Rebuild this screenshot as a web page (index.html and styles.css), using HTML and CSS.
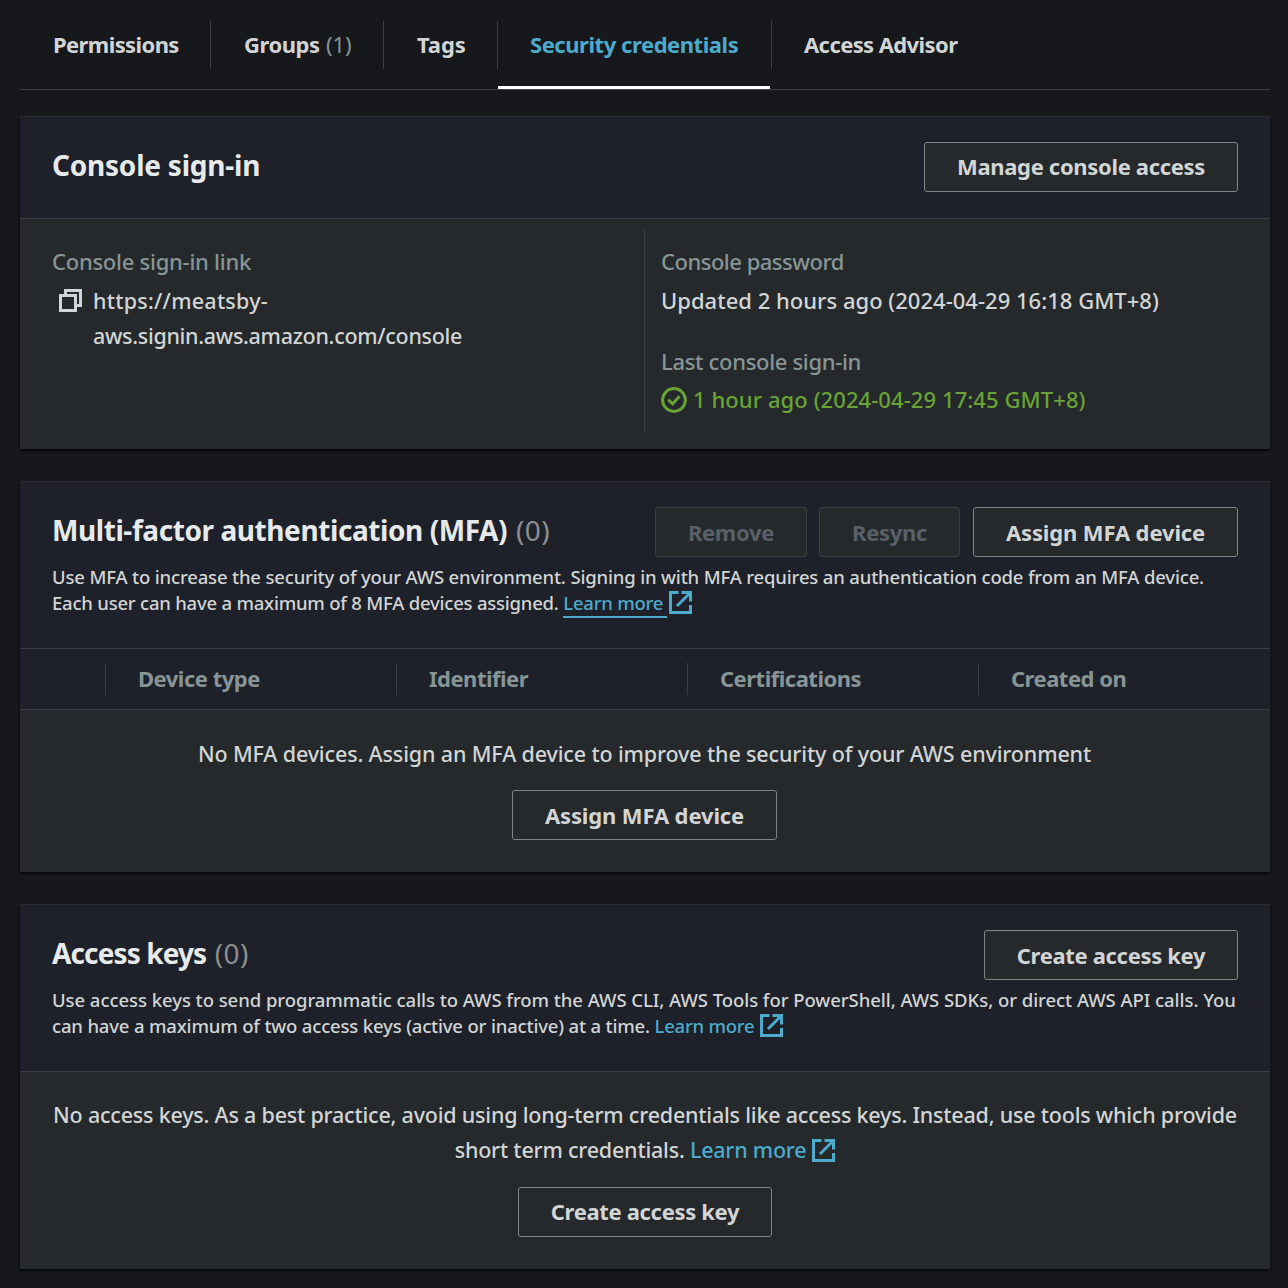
FILE: index.html
```
<!DOCTYPE html>
<html lang="en">
<head>
<meta charset="utf-8">
<title>Security credentials</title>
<link rel="stylesheet" href="styles.css">
</head>
<body>
<svg class="sprite" aria-hidden="true">
  <symbol id="external" viewBox="0 0 23 23">
    <path d="M9.5 1.5H1.5V21.5H21.5V14" fill="none" stroke="currentColor" stroke-width="3"/>
    <path d="M12.5 1.5H21.5V10.5M21 2L8 15" fill="none" stroke="currentColor" stroke-width="3"/>
  </symbol>
</svg>
<nav class="tabs">
  <div class="tab tab-permissions">Permissions</div>
  <div class="tab tab-groups">Groups <span class="tab-count">(1)</span></div>
  <div class="tab tab-tags">Tags</div>
  <div class="tab tab-security active">Security credentials</div>
  <div class="tab tab-advisor">Access Advisor</div>
</nav>
<main>
  <section class="card">
    <header class="card-head signin-head">
      <div class="head-row">
        <h2 class="title-signin">Console sign-in</h2>
        <button class="btn btn-manage">Manage console access</button>
      </div>
    </header>
    <div class="columns">
      <div class="col">
        <div class="label label-link">Console sign-in link</div>
        <div class="value copy-row">
          <svg class="copy" viewBox="0 0 23 23"><path d="M1.5 6.5H16.5V21.5H1.5ZM6.5 6V1.5H21.5V16.5H17" fill="none" stroke="currentColor" stroke-width="3"/></svg>
          <div><span class="url-a">https://meatsby-</span><br><span class="url-b">aws.signin.aws.amazon.com/console</span></div>
        </div>
      </div>
      <div class="col col-right">
        <div class="label label-password">Console password</div>
        <div class="value updated">Updated 2 hours ago (2024-04-29 16:18 GMT+8)</div>
        <div class="label label-last">Last console sign-in</div>
        <div class="value success">
          <svg class="check" viewBox="0 0 26 26"><circle cx="13" cy="13" r="11.4" fill="none" stroke="currentColor" stroke-width="3"/><path d="M7.2 12.7L11.6 16.8L18.6 9.3" fill="none" stroke="currentColor" stroke-width="3"/></svg>
          <span>1 hour ago (2024-04-29 17:45 GMT+8)</span>
        </div>
      </div>
    </div>
  </section>

  <section class="card">
    <header class="card-head">
      <div class="head-row">
        <h2 class="title-mfa">Multi-factor authentication (MFA) <span class="count">(0)</span></h2>
        <div class="actions">
          <button class="btn btn-remove" disabled>Remove</button>
          <button class="btn btn-resync" disabled>Resync</button>
          <button class="btn btn-assign">Assign MFA device</button>
        </div>
      </div>
      <p class="desc"><span class="mfa-a">Use MFA to increase the security of your AWS environment. Signing in with MFA requires an authentication code from an MFA device.</span><br><span class="mfa-b">Each user can have a maximum of 8 MFA devices assigned. </span><a class="link focused">Learn more</a><svg class="ext"><use href="#external"/></svg></p>
    </header>
    <div class="table-head">
      <div class="th th-select"></div>
      <div class="th">Device type</div>
      <div class="th">Identifier</div>
      <div class="th">Certifications</div>
      <div class="th">Created on</div>
    </div>
    <div class="empty">
      <p class="empty-mfa">No MFA devices. Assign an MFA device to improve the security of your AWS environment</p>
      <button class="btn btn-assign">Assign MFA device</button>
    </div>
  </section>

  <section class="card">
    <header class="card-head">
      <div class="head-row">
        <h2 class="title-keys">Access keys <span class="count">(0)</span></h2>
        <button class="btn btn-create">Create access key</button>
      </div>
      <p class="desc"><span class="keys-a">Use access keys to send programmatic calls to AWS from the AWS CLI, AWS Tools for PowerShell, AWS SDKs, or direct AWS API calls. You</span><br><span class="keys-b">can have a maximum of two access keys (active or inactive) at a time. </span><a class="link">Learn more</a><svg class="ext"><use href="#external"/></svg></p>
    </header>
    <div class="empty empty-wide">
      <p class="empty-keys">No access keys. As a best practice, avoid using long-term credentials like access keys. Instead, use tools which provide<br>short term credentials. <a class="link">Learn more</a><svg class="ext"><use href="#external"/></svg></p>
      <button class="btn btn-create btn-raised">Create access key</button>
    </div>
  </section>
</main>
</body>
</html>
```
FILE: styles.css
```
* { box-sizing: border-box; }
body {
  margin: 0;
  padding: 0 18px 0 20px;
  height: 1288px;
  overflow: hidden;
  background: #17181c;
  color: #d2d5d5;
  font: 500 22px/35px "Noto Sans", "Open Sans", sans-serif;
  white-space: nowrap;
}
h2, p { margin: 0; }
.sprite { display: none; }

/* Tabs */
.tabs {
  display: flex;
  height: 90px;
  padding-top: 21px;
  border-bottom: 1px solid #3e4046;
}
.tab {
  height: 48px;
  padding-left: 32px;
  border-right: 1px solid #3e4046;
  font-weight: 700;
  line-height: 46px;
  letter-spacing: -0.45px;
}
.tab-permissions { width: 191px; padding-left: 33px; letter-spacing: -0.6px; }
.tab-groups { width: 173px; padding-left: 33px; }
.tab-tags { width: 114px; padding-left: 33px; letter-spacing: -0.1px; }
.tab-security { width: 274px; letter-spacing: -0.45px; }
.tab-advisor { border-right: 0; letter-spacing: -0.6px; }
.tab-count { margin-left: 1px; color: #879596; font-weight: 400; letter-spacing: 0; }
.active { position: relative; color: #4cabcc; }
.active::after {
  content: "";
  position: absolute;
  left: 0;
  right: 1px;
  bottom: -20px;
  height: 3px;
  background: #fff;
}

/* Cards */
main {
  display: flex;
  flex-direction: column;
  gap: 32px;
  padding-top: 26px;
}
.card {
  background: #25292b;
  box-shadow: 0 2px 2px -1px #060709, 1px 2px 2px -1px #0c0d10, -1px 2px 2px -1px #0c0d10;
}
.card-head {
  padding: 25px 32px 33px;
  border-top: 1px solid #282a2e;
  border-bottom: 1px solid #3b3e45;
  background: #1e2129;
}
.signin-head { padding-bottom: 26px; }
.head-row { display: flex; justify-content: space-between; height: 50px; }
h2 { color: #e7eaea; font-size: 28px; font-weight: 700; line-height: 46px; }
.title-signin { letter-spacing: -0.22px; }
.title-mfa { letter-spacing: -0.42px; }
.title-keys { letter-spacing: -0.88px; }
.count { margin-left: 2px; color: #8c8d8f; font-weight: 400; letter-spacing: 0.4px; }
.actions { display: flex; gap: 12px; }
.btn {
  height: 50px;
  padding: 0;
  border: 1px solid #7b8889;
  border-radius: 3px;
  background: #25292b;
  color: #d2d5d5;
  font: 700 22px/48px "Noto Sans", "Open Sans", sans-serif;
  letter-spacing: -0.33px;
}
.btn:disabled { border-color: #3a3d42; color: #596069; }
.btn-manage { width: 314px; padding-bottom: 2px; line-height: 46px; }
.btn-remove { width: 152px; }
.btn-resync { width: 141px; margin-right: 1px; }
.btn-assign { width: 265px; letter-spacing: -0.13px; }
.btn-create { width: 254px; }
.btn-raised { padding-bottom: 2px; line-height: 46px; }

.desc { margin-top: 7px; height: 51px; font-size: 18.5px; line-height: 26px; }
.mfa-a { letter-spacing: -0.166px; }
.mfa-b { letter-spacing: -0.22px; }
.keys-a { letter-spacing: -0.05px; }
.keys-b { letter-spacing: -0.17px; }
.link { color: #4cabcc; letter-spacing: -0.24px; }
.focused { padding: 0 4px 1px 0; border-bottom: 2px solid #4cabcc; }
.ext {
  width: 23px;
  height: 23px;
  margin: -4px 0 -4px 6px;
  color: #4cabcc;
  vertical-align: 0;
}
.focused + .ext { margin-left: 2px; }

/* Sign-in details */
.columns { display: flex; height: 230px; padding: 9px 0 16px; }
.col { padding: 16px 0 0 32px; }
.col:first-child { width: 624px; }
.col-right { padding-left: 16px; border-left: 1px solid #3b3e45; }
.label { color: #879596; }
.label-link { letter-spacing: -0.26px; }
.label-password { letter-spacing: -0.5px; }
.label-last { margin-top: 26px; letter-spacing: -0.32px; }
.value { margin-top: 4px; }
.copy-row { display: flex; gap: 11px; padding-left: 7px; font-size: 21.5px; }
.copy { width: 23px; height: 23px; margin-top: 6px; }
.url-a { letter-spacing: 0.25px; }
.url-b { letter-spacing: -0.3px; }
.updated { letter-spacing: 0.02px; }
.success {
  display: flex;
  align-items: center;
  gap: 6px;
  margin-top: 3px;
  color: #69a336;
  letter-spacing: 0.08px;
}
.check { width: 26px; height: 26px; }

/* Device table */
.table-head {
  display: flex;
  align-items: center;
  height: 61px;
  border-bottom: 1px solid #3b3e45;
  background: #1e2129;
}
.th {
  width: 291px;
  height: 32px;
  padding-left: 32px;
  border-right: 1px solid #3b3e45;
  color: #879596;
  font-weight: 700;
  line-height: 30px;
  letter-spacing: -0.5px;
}
.th-select { width: 86px; }
.th:last-child { border-right: 0; }

.empty {
  display: flex;
  flex-direction: column;
  align-items: center;
  gap: 19px;
  padding: 26px 1px 32px 0;
  font-size: 21.5px;
  text-align: center;
}
.empty-wide { gap: 20px; padding: 25px 0 32px; }
.empty-mfa { letter-spacing: -0.14px; }
.empty-keys { height: 70px; letter-spacing: -0.21px; }
```
